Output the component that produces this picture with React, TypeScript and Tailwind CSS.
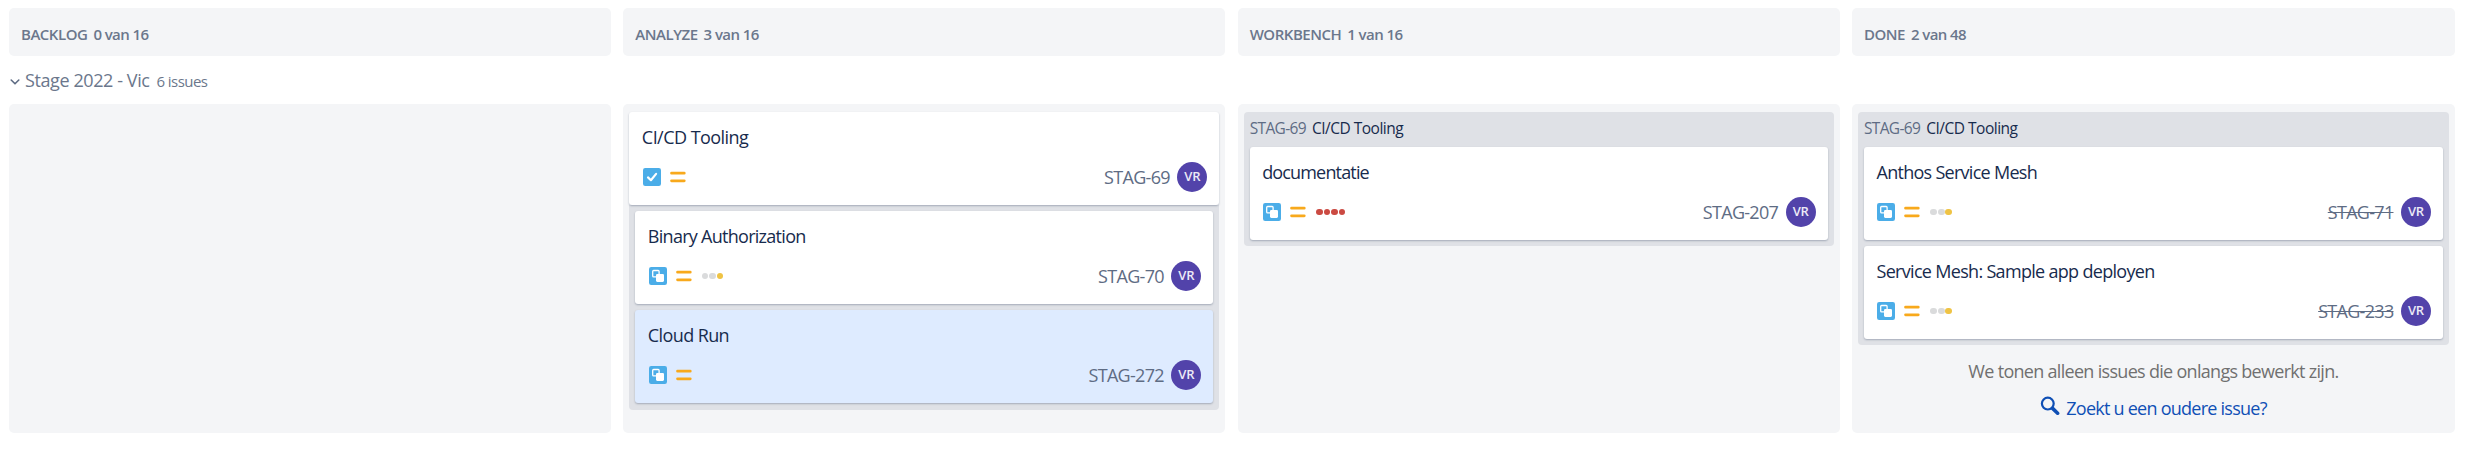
import type { ReactNode } from 'react';
import clsx from 'clsx';

type Estimate = 'low' | 'high';

interface Issue {
  id: string;
  title: string;
  type: 'task' | 'subtask';
  estimate?: Estimate;
  done?: boolean;
  selected?: boolean;
  tracking?: string;
}

function TaskIcon() {
  return (
    <svg width="18" height="18" viewBox="0 0 18 18" className="shrink-0">
      <rect width="18" height="18" rx="2.2" fill="#4bade8" />
      <path d="M5 9.4 L7.9 12.2 L13.1 5.9" fill="none" stroke="#fff" strokeWidth="2.2" strokeLinecap="round" strokeLinejoin="round" />
    </svg>
  );
}

function SubtaskIcon() {
  return (
    <svg width="18" height="18" viewBox="0 0 18 18" className="shrink-0">
      <rect width="18" height="18" rx="2.2" fill="#4bade8" />
      <rect x="3.7" y="3.5" width="6.4" height="6.4" rx="0.9" fill="none" stroke="#fff" strokeWidth="1.3" />
      <rect x="7" y="6.9" width="8" height="8" rx="1.3" fill="#fff" />
    </svg>
  );
}

function MediumPriority() {
  return (
    <svg width="16" height="18" viewBox="0 0 16 18" className="ml-[9px] shrink-0">
      <path d="M1.5 5.2h12.8M1.5 12.8h12.8" stroke="#f8a91c" strokeWidth="2.7" strokeLinecap="round" />
    </svg>
  );
}

function Dots({ level }: { level: Estimate }) {
  const colors = level === 'high' ? ['#cb4a42', '#cb4a42', '#cb4a42', '#cb4a42'] : ['#dadbdc', '#dadbdc', '#efc344'];
  return (
    <div className="ml-[10px] flex gap-[0.9px]">
      {colors.map((c, i) => (
        <span key={i} className="size-[6.6px] rounded-full" style={{ backgroundColor: c }} />
      ))}
    </div>
  );
}

function Card({ issue }: { issue: Issue }) {
  return (
    <div
      className={clsx(
        'relative h-[93px] rounded-[3px] pt-[13px] pr-3 pl-[13.5px] shadow-[0_1px_2px_rgba(9,30,66,0.28)]',
        issue.selected ? 'bg-[#deebff]' : 'bg-white',
      )}
    >
      <div className={clsx('-ml-px h-[25px] text-[18px] leading-[25px] text-[#172b4d]', issue.tracking ?? 'tracking-[-0.72px]')}>
        {issue.title}
      </div>
      <div className="mt-3 flex h-[30px] items-center">
        {issue.type === 'task' ? <TaskIcon /> : <SubtaskIcon />}
        <MediumPriority />
        {issue.estimate && <Dots level={issue.estimate} />}
        <span className={clsx('ml-auto text-[18px] leading-6 tracking-[-0.7px] text-[#5e6c84]', issue.done && 'line-through')}>
          {issue.id}
        </span>
        <span className="ml-[7.5px] flex size-[30px] items-center justify-center rounded-full bg-[#5243aa] text-[13px] font-semibold tracking-[-0.2px] text-[#eceaf6]">
          VR
        </span>
      </div>
    </div>
  );
}

function Parent() {
  return (
    <div className="h-[35px] text-[15.5px] leading-8">
      <span className="tracking-[-0.65px] text-[#5e6c84]">STAG-69</span>
      <span className="ml-1.5 tracking-[-0.5px] text-[#172b4d]">CI/CD Tooling</span>
    </div>
  );
}

function Header({ name, count }: { name: string; count: string }) {
  return (
    <div className="flex h-12 items-center gap-[6px] rounded-[5px] bg-[#f4f5f7] pt-[5px] pl-3 text-[15px] font-semibold text-[#6b778c]">
      <span className="tracking-[-0.48px]">{name}</span>
      <span className="tracking-[-0.58px]">{count}</span>
    </div>
  );
}

function Column({ children }: { children?: ReactNode }) {
  return <div className="h-[329px] rounded-[5px] bg-[#f4f5f7] px-1.5 pt-2">{children}</div>;
}

export default function App() {
  return (
    <div className="h-[461px] bg-white pt-2 pr-[25px] pl-[9px] font-['Open_Sans','Noto_Sans',sans-serif]">
      <div className="grid grid-cols-[602px_602px_602px_603px] justify-between">
        <Header name="BACKLOG" count="0 van 16" />
        <Header name="ANALYZE" count="3 van 16" />
        <Header name="WORKBENCH" count="1 van 16" />
        <Header name="DONE" count="2 van 48" />
      </div>

      <div className="flex h-12 items-center text-[#6b778c]">
        <svg width="12" height="12" viewBox="0 0 12 12" className="mt-1 shrink-0">
          <path d="M2.2 4 L6 7.8 L9.8 4" fill="none" stroke="#5e6c84" strokeWidth="1.6" strokeLinecap="round" strokeLinejoin="round" />
        </svg>
        <div className="ml-1 flex items-baseline">
          <span className="text-[18px] tracking-[-0.41px]">Stage 2022 - Vic</span>
          <span className="ml-[7px] text-[15px] tracking-[-0.55px]">6 issues</span>
        </div>
      </div>

      <div className="grid grid-cols-[602px_602px_602px_603px] justify-between">
        <Column />

        <Column>
          <Card issue={{ id: 'STAG-69', title: 'CI/CD Tooling', type: 'task', tracking: 'tracking-[-0.54px]' }} />
          <div className="flex flex-col gap-1.5 rounded-b-[4px] bg-[#dfe1e6] px-1.5 pt-1.5 pb-[7px]">
            <Card issue={{ id: 'STAG-70', title: 'Binary Authorization', type: 'subtask', estimate: 'low' }} />
            <Card issue={{ id: 'STAG-272', title: 'Cloud Run', type: 'subtask', selected: true, tracking: 'tracking-[-0.6px]' }} />
          </div>
        </Column>

        <Column>
          <div className="rounded-[4px] bg-[#dfe1e6] px-1.5 pb-1.5">
            <Parent />
            <Card issue={{ id: 'STAG-207', title: 'documentatie', type: 'subtask', estimate: 'high', tracking: 'tracking-[-0.84px]' }} />
          </div>
        </Column>

        <Column>
          <div className="rounded-[4px] bg-[#dfe1e6] px-1.5 pb-1.5">
            <Parent />
            <div className="flex flex-col gap-1.5">
              <Card issue={{ id: 'STAG-71', title: 'Anthos Service Mesh', type: 'subtask', estimate: 'low', done: true }} />
              <Card issue={{ id: 'STAG-233', title: 'Service Mesh: Sample app deployen', type: 'subtask', estimate: 'low', done: true, tracking: 'tracking-[-0.69px]' }} />
            </div>
          </div>
          <p className="mt-[14px] text-center text-[18px] leading-6 tracking-[-0.7px] text-[#707070]">
            We tonen alleen issues die onlangs bewerkt zijn.
          </p>
          <a className="mt-[13px] flex justify-center text-[18px] leading-6 tracking-[-0.75px] text-[#0f4fb5]">
            <svg width="20" height="20" viewBox="0 0 20 20" className="mr-[6px] shrink-0">
              <circle cx="7.8" cy="7.6" r="5.9" fill="none" stroke="#0f4fb5" strokeWidth="2.2" />
              <path d="M12.6 12.4 L17.6 17.2" stroke="#0f4fb5" strokeWidth="3.6" strokeLinecap="round" />
            </svg>
            Zoekt u een oudere issue?
          </a>
        </Column>
      </div>
    </div>
  );
}
